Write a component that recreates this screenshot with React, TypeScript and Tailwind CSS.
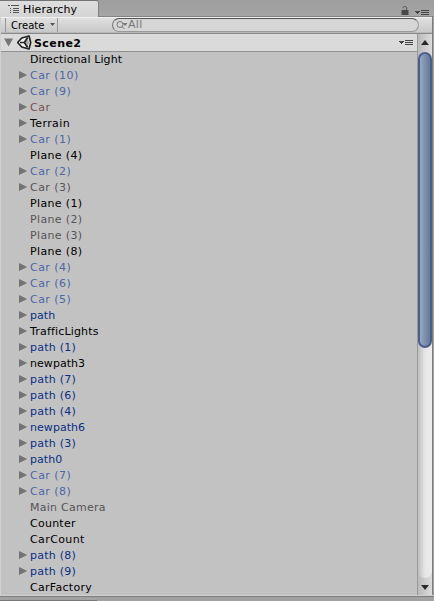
type Kind = "normal" | "prefab" | "prefabOff" | "off" | "missing";
type Item = { name: string; kind: Kind; parent?: boolean };

const tones: Record<Kind, string> = {
  normal: "text-black",
  prefab: "text-[#092e82]",
  prefabOff: "text-[#4c67a4]",
  off: "text-[#555555]",
  missing: "text-[#795052]",
};

const items: Item[] = [
  { name: "Directional Light", kind: "normal" },
  { name: "Car (10)", kind: "prefabOff", parent: true },
  { name: "Car (9)", kind: "prefabOff", parent: true },
  { name: "Car", kind: "missing", parent: true },
  { name: "Terrain", kind: "normal", parent: true },
  { name: "Car (1)", kind: "prefabOff", parent: true },
  { name: "Plane (4)", kind: "normal" },
  { name: "Car (2)", kind: "prefabOff", parent: true },
  { name: "Car (3)", kind: "off", parent: true },
  { name: "Plane (1)", kind: "normal" },
  { name: "Plane (2)", kind: "off" },
  { name: "Plane (3)", kind: "off" },
  { name: "Plane (8)", kind: "normal" },
  { name: "Car (4)", kind: "prefabOff", parent: true },
  { name: "Car (6)", kind: "prefabOff", parent: true },
  { name: "Car (5)", kind: "prefabOff", parent: true },
  { name: "path", kind: "prefab", parent: true },
  { name: "TrafficLights", kind: "normal", parent: true },
  { name: "path (1)", kind: "prefab", parent: true },
  { name: "newpath3", kind: "normal", parent: true },
  { name: "path (7)", kind: "prefab", parent: true },
  { name: "path (6)", kind: "prefab", parent: true },
  { name: "path (4)", kind: "prefab", parent: true },
  { name: "newpath6", kind: "prefab", parent: true },
  { name: "path (3)", kind: "prefab", parent: true },
  { name: "path0", kind: "prefab", parent: true },
  { name: "Car (7)", kind: "prefabOff", parent: true },
  { name: "Car (8)", kind: "prefabOff", parent: true },
  { name: "Main Camera", kind: "off" },
  { name: "Counter", kind: "normal" },
  { name: "CarCount", kind: "normal" },
  { name: "path (8)", kind: "prefab", parent: true },
  { name: "path (9)", kind: "prefab", parent: true },
  { name: "CarFactory", kind: "normal" },
];

function tracking(name: string) {
  if (name === "Car") return "tracking-[0.6px]";
  if (name.startsWith("Car (")) return "tracking-[0.45px]";
  if (name.startsWith("Plane")) return "tracking-[0.35px]";
  if (name.startsWith("path (")) return "tracking-[0.25px]";
  if (name === "TrafficLights") return "tracking-[0.17px]";
  if (name === "CarFactory") return "tracking-[0.3px]";
  if (name === "Terrain" || name === "CarCount") return "tracking-[0.4px]";
  if (name === "Main Camera" || name === "Counter") return "tracking-[0.25px]";
  if (name === "Directional Light") return "tracking-[0.1px]";
  return "tracking-[0.05px]";
}

function MenuIcon() {
  return (
    <svg width="14" height="6" viewBox="0 0 14 6" className="block shrink-0" shapeRendering="crispEdges">
      <path d="M0 1h5v1h-1v1h-1v1h-1v-1h-1v-1h-1z" fill="#444" />
      <path d="M6 0h8v1h-8zM6 2h8v1h-8zM6 4h8v1h-8z" fill="#444" />
    </svg>
  );
}

function HierarchyIcon() {
  return (
    <svg width="12" height="8" viewBox="0 0 12 8" className="block shrink-0" shapeRendering="crispEdges">
      <path d="M0 0h2v1h-2zM3 0h8v1h-8zM2 3h1v1h-1zM5 3h6v1h-6zM2 5h1v1h-1zM5 5h6v1h-6zM2 7h1v1h-1zM5 7h6v1h-6z" fill="#555" />
    </svg>
  );
}

function SceneIcon() {
  return (
    <svg width="15" height="15" viewBox="0 0 15 15" className="block shrink-0">
      <path d="M.6 7.5 4.8 3 12 1 13.6 7.5 12 14 4.8 12Z" fill="#f3f3f3" />
      <path d="M4.8 3 12 1 13.7 7.5 12 14 4.8 12 .6 7.5Z" fill="none" stroke="#222" strokeWidth="1.7" strokeLinejoin="round" />
      <path d="M10.4 3.3 12.1 7.5 10.4 11.7 8.6 7.5Z" fill="#aaa" />
      <path d="M7.4 7.5H3M7.4 7.5l3.2-5M7.4 7.5l3.2 5" fill="none" stroke="#222" strokeWidth="1.7" />
    </svg>
  );
}

function LockIcon() {
  return (
    <svg width="8" height="10" viewBox="0 0 8 10" className="block shrink-0">
      <path d="M2 2.4V1.7Q2 .6 3.3.6h1Q5.6.6 5.6 1.8V4.5" fill="none" stroke="#555" strokeWidth="1" />
      <path d="M.5 4h7v5h-7z" fill="#484848" />
    </svg>
  );
}

function Row({ item }: { item: Item }) {
  return (
    <div className={`flex h-4 shrink-0 items-start pl-[18px] ${tones[item.kind]}`}>
      <span className="flex w-[11px] shrink-0 pt-[3px]">
        {item.parent && (
          <svg width="9" height="8" viewBox="0 0 9 8" className="block">
            <path d="M0 0 8.2 4 0 8Z" fill="#737373" />
          </svg>
        )}
      </span>
      <span className={`whitespace-nowrap leading-4 ${tracking(item.name)}`}>{item.name}</span>
    </div>
  );
}

export default function App() {
  return (
    <div className="flex h-[601px] w-[434px] flex-col overflow-hidden bg-[#a2a2a2] font-['DejaVu_Sans',sans-serif] text-[11px] tracking-[0.12px] text-black">
      <div className="flex h-[17px] shrink-0 items-end justify-between border-b border-[#848484] bg-gradient-to-b from-[#9e9e9e] to-[#a5a5a5] pr-[5px]">
        <div className="-mb-px flex h-[17px] w-[99px] items-center rounded-tr-[3px] border-t border-r border-t-[#747474] border-r-[#808080] bg-gradient-to-b from-[#dedede] to-[#d4d4d4] pl-2">
          <HierarchyIcon />
          <span className="ml-[3px] mt-[2px] leading-4">Hierarchy</span>
        </div>
        <div className="flex items-end gap-[6px]">
          <LockIcon />
          <MenuIcon />
        </div>
      </div>

      <div className="mr-px flex min-h-0 flex-1 border-r border-[#7c7c7c]">
        <div className="flex min-w-0 flex-1 flex-col border-l border-[#d0d0d0]">
          <div className="flex h-4 shrink-0 items-stretch border-t border-b border-t-[#f0f0f0] border-b-[#b8b8b8] bg-gradient-to-b from-[#e0e0e0] to-[#c8c8c8]">
            <div className="ml-1 flex w-[53px] items-center border-x border-[#999] pl-[5px] text-[10px] tracking-[0.05px]">
              <span className="mt-px">Create</span>
              <svg width="5" height="3" className="mb-px ml-[5px] block">
                <path d="M0 0h5L2.5 3Z" fill="#555" />
              </svg>
            </div>
            <div className="ml-[54px] flex w-[307px] items-center rounded-full border border-t-[#555] border-r-[#999] border-b-[#999] border-l-[#777] bg-[#d6d6d6] pl-[3px] tracking-[0.3px] text-[#777]">
              <svg width="12" height="10" viewBox="0 0 12 10" className="block">
                <circle cx="4" cy="4.5" r="3" fill="none" stroke="#777" />
                <path d="m6 6.5 2.5 2.5" stroke="#777" />
                <path d="M6.5 3h5L9 6Z" fill="#777" />
              </svg>
              <span className="leading-3">All</span>
            </div>
          </div>

          <div className="flex min-h-0 flex-1 border-t border-[#898989]">
            <div className="flex min-w-0 flex-1 flex-col bg-[#c2c2c2]">
              <div className="flex h-[18px] shrink-0 items-center border-b border-[#919191] bg-[#dadada] pl-[3px] pr-[4px]">
                <svg width="9" height="9" className="block shrink-0">
                  <path d="M0 .5h9L4.5 8.5Z" fill="#777" />
                </svg>
                <span className="ml-1"><SceneIcon /></span>
                <span className="ml-[2px] mt-[3px] flex-1 font-bold leading-[14px] tracking-[0.42px]">Scene2</span>
                <MenuIcon />
              </div>
              <div className="flex min-h-0 flex-1 flex-col overflow-hidden">
                {items.map((item) => (
                  <Row key={item.name} item={item} />
                ))}
              </div>
            </div>
            <div className="flex w-[15px] shrink-0 flex-col border-l border-[#999] bg-gradient-to-r from-[#bababa] to-[#dcdcdc]">
              <div className="flex h-[18px] shrink-0 items-center justify-center pb-[2px]">
                <svg width="8" height="5" className="block"><path d="M4 0 8 5H0Z" fill="#292929" /></svg>
              </div>
              <div className="min-h-0 flex-1 rounded-full bg-gradient-to-r from-[#bebebe] via-[#e6e6e6] to-[#ededed]">
                <div className="h-[296px] w-[14px] rounded-full border-2 border-[#496084] bg-gradient-to-r from-[#96a7bf] to-[#64799b]" />
              </div>
              <div className="flex h-[17px] shrink-0 items-center justify-center pt-[2px]">
                <svg width="8" height="5" className="block"><path d="M0 0h8L4 5Z" fill="#292929" /></svg>
              </div>
            </div>
          </div>
        </div>
      </div>
      <div className="h-[6px] shrink-0 border-t border-[#d0d0d0]">
        <div className="h-full border-t border-[#7d7d7d]">
          <div className="mt-[3px] h-px w-[97px] bg-[#777]" />
        </div>
      </div>
    </div>
  );
}
